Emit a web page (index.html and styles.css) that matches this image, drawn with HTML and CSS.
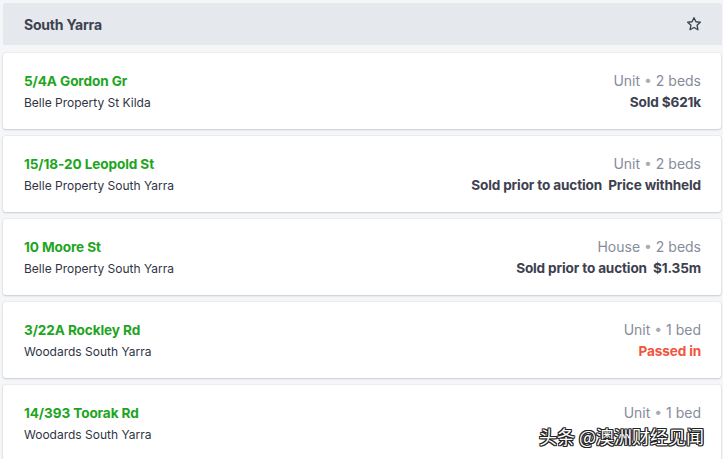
FILE: index.html
```html
<!DOCTYPE html>
<html>
<head>
<meta charset="utf-8">
<link rel="stylesheet" href="styles.css">
</head>
<body>
<div class="page">
  <div class="header">
    <span class="title">South Yarra</span>
    <svg class="star" width="16" height="16" viewBox="0 0 24 24" fill="none" stroke="#3d4150" stroke-width="2" stroke-linejoin="round"><path d="M12 2.5l2.9 6.1 6.6.8-4.9 4.6 1.3 6.6L12 17.3l-5.9 3.3 1.3-6.6-4.9-4.6 6.6-.8z"/></svg>
  </div>
  <div class="list">
    <div class="card">
      <div class="left"><div class="addr">5/4A Gordon Gr</div><div class="agent">Belle Property St Kilda</div></div>
      <div class="right"><div class="meta">Unit <span class="dot">•</span> 2 beds</div><div class="result">Sold $621k</div></div>
    </div>
    <div class="card">
      <div class="left"><div class="addr">15/18-20 Leopold St</div><div class="agent">Belle Property South Yarra</div></div>
      <div class="right"><div class="meta">Unit <span class="dot">•</span> 2 beds</div><div class="result">Sold prior to auction&nbsp; Price withheld</div></div>
    </div>
    <div class="card">
      <div class="left"><div class="addr">10 Moore St</div><div class="agent">Belle Property South Yarra</div></div>
      <div class="right"><div class="meta">House <span class="dot">•</span> 2 beds</div><div class="result">Sold prior to auction&nbsp; $1.35m</div></div>
    </div>
    <div class="card">
      <div class="left"><div class="addr">3/22A Rockley Rd</div><div class="agent">Woodards South Yarra</div></div>
      <div class="right"><div class="meta">Unit <span class="dot">•</span> 1 bed</div><div class="result passed">Passed in</div></div>
    </div>
    <div class="card">
      <div class="left"><div class="addr">14/393 Toorak Rd</div><div class="agent">Woodards South Yarra</div></div>
      <div class="right"><div class="meta">Unit <span class="dot">•</span> 1 bed</div><div class="result">&nbsp;</div></div>
    </div>
  </div>
</div>
<div class="watermark">头条 @澳洲财经见闻</div>
</body>
</html>
```
FILE: styles.css
```css
html, body {
  margin: 0;
  padding: 0;
  background: #f5f6f8;
  font-family: Inter, "Noto Sans", sans-serif;
  overflow: hidden;
}
body {
  width: 723px;
  height: 459px;
  position: relative;
}
.page {
  padding: 3px 1px 0 3px;
}
.header {
  height: 42px;
  background: #e5e8ec;
  display: flex;
  align-items: center;
  justify-content: space-between;
  padding: 0 20px 0 21px;
  border-radius: 3px 3px 0 0;
}
.title {
  font-size: 14px;
  font-weight: 700;
  color: #3d4150;
  letter-spacing: -0.2px;
}
.star { display: block; }
.list {
  display: flex;
  flex-direction: column;
  gap: 7px;
  padding-top: 8px;
  margin-right: 1px;
}
.card {
  height: 76px;
  box-sizing: border-box;
  background: #fff;
  border-radius: 3px;
  box-shadow: 0 1px 2px rgba(40, 50, 70, 0.18), 0 0 0 1px rgba(40,50,70,0.04);
  display: flex;
  justify-content: space-between;
  align-items: flex-start;
  padding: 18px 20px 0 21px;
}
.addr {
  font-size: 13.6px;
  font-weight: 700;
  color: #1ea51e;
  line-height: 20px;
  letter-spacing: -0.1px;
}
.agent {
  font-size: 12px;
  color: #2f3444;
  line-height: 20px;
  margin-top: 2px;
}
.right { text-align: right; }
.meta {
  font-size: 14px;
  color: #878c9b;
  line-height: 20px;
}
.dot { color: #a8acb6; font-size: 14px; padding: 0; }
.result {
  font-size: 13.6px;
  font-weight: 700;
  color: #3d4150;
  line-height: 20px;
  margin-top: 1px;
  letter-spacing: -0.15px;
}
.passed { color: #f2543d; }
.watermark {
  position: absolute;
  left: 539px;
  top: 423px;
  font-family: "Noto Sans CJK SC", sans-serif;
  font-size: 18px;
  color: #fff;
  text-shadow: -1px 0 #222, 1px 0 #222, 0 -1px #222, 0 1px #222, 1px 1px #222, -1px -1px #222, 1px -1px #222, -1px 1px #222;
  letter-spacing: 0;
  white-space: nowrap;
}
```
